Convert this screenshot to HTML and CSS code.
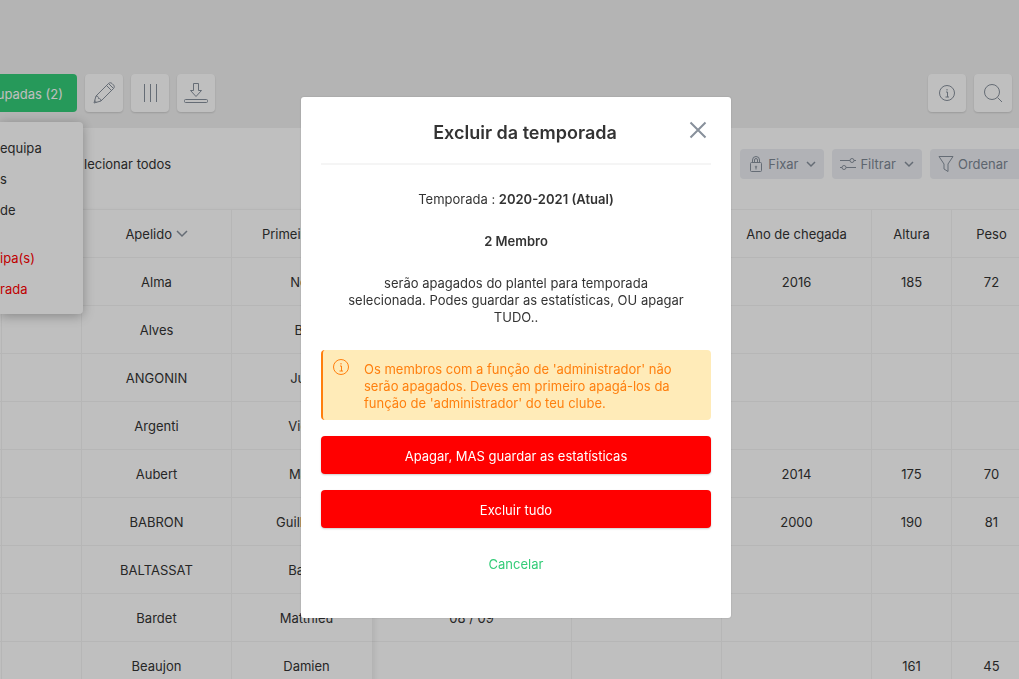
FILE: index.html
```html
<!DOCTYPE html>
<html lang="pt">
<head>
  <meta charset="UTF-8" />
  <title>Plantel</title>
  <link rel="stylesheet" href="styles.css">
</head>
<body>
  <div class="page">
    <header class="toolbar">
      <div class="grouped">
        <button class="btn-green">upadas (2)</button>
        <ul class="menu">
          <li><a href="#">equipa</a></li>
          <li><a href="#">s</a></li>
          <li><a href="#">de</a></li>
          <li class="danger first"><a href="#">ipa(s)</a></li>
          <li class="danger"><a href="#">rada</a></li>
        </ul>
      </div>
      <button class="btn-icon" aria-label="Editar">
        <svg width="24" height="24" viewBox="0 0 24 24"><path d="M2 22l2-7L16.500 2.500c1-1 2.500-1 3.500 0l1.500 1.500c1 1 1 2.500 0 3.500L9 20l-7 2zM4 15c2 0 2.500 1 2.500 2.500C8 17.500 9 18 9 20M14.500 4.500l5 5M16.500 2.500l5 5M2.800 19.500l1.700 1.700"/></svg>
      </button>
      <button class="btn-icon" aria-label="Colunas">
        <svg width="24" height="24" viewBox="0 0 24 24"><path d="M6.500 3v18M12.500 3v18M18.500 3v18"/></svg>
      </button>
      <button class="btn-icon" aria-label="Transferir">
        <svg width="24" height="24" viewBox="0 0 24 24"><path d="M9.500 2.500h5v7h3L12 15.500l-5.500-6h3zM1.500 18.500h21a1 1 0 0 1 1 1v1a1 1 0 0 1-1 1h-21a1 1 0 0 1-1-1v-1a1 1 0 0 1 1-1z"/></svg>
      </button>
      <button class="btn-icon push" aria-label="Informação">
        <svg width="18" height="18" viewBox="0 0 18 18"><circle cx="9" cy="9" r="7.500"/><path d="M8 8h1.500v5M7.500 13h3.500M9 5v1.500"/></svg>
      </button>
      <button class="btn-icon" aria-label="Procurar">
        <svg width="20" height="20" viewBox="0 0 20 20"><circle cx="9" cy="9" r="7.500"/><path d="M14.500 14.500l4.500 4.500"/></svg>
      </button>
    </header>

    <main>
      <div class="filters">
        <span class="select-all">lecionar todos</span>
        <button class="btn-filter">
          <svg width="16" height="18" viewBox="0 0 16 18"><rect x="2.500" y="7.500" width="11" height="9" rx="1"/><path d="M4.500 7.500V5a3.500 3.500 0 0 1 7 0v2.500M6.500 7.500V5a1.500 1.500 0 0 1 3 0v2.500M8 12.500v2"/><circle cx="8" cy="11.800" r=".7"/></svg>
          Fixar
          <svg class="chevron" width="10" height="10" viewBox="0 0 10 10"><path d="M1 3l4 4 4-4"/></svg>
        </button>
        <button class="btn-filter">
          <svg width="16" height="18" viewBox="0 0 16 18"><path d="M0 5.500h10M14 5.500h2M0 12.500h2M6 12.500h10"/><circle cx="12" cy="5.500" r="2"/><circle cx="4" cy="12.500" r="2"/></svg>
          Filtrar
          <svg class="chevron" width="10" height="10" viewBox="0 0 10 10"><path d="M1 3l4 4 4-4"/></svg>
        </button>
        <button class="btn-filter">
          <svg width="16" height="18" viewBox="0 0 16 18"><path d="M1 1.500h14L10 9v7.500L6 14V9z"/></svg>
          Ordenar
        </button>
      </div>

      <div class="tables">
        <div class="pinned">
          <table>
            <colgroup><col class="w-edge"><col class="w-80"><col class="w-150"><col class="w-150"></colgroup>
            <thead>
              <tr><th></th><th></th><th>Apelido <svg class="sort" width="12" height="10" viewBox="0 0 12 10"><path d="M1 2l5 5 5-5"/></svg></th><th>Primeiro nome</th></tr>
            </thead>
            <tbody>
              <tr><td></td><td></td><td>Alma</td><td>Noah</td></tr>
              <tr><td></td><td></td><td>Alves</td><td>Ben</td></tr>
              <tr><td></td><td></td><td>ANGONIN</td><td>Jules</td></tr>
              <tr><td></td><td></td><td>Argenti</td><td>Victor</td></tr>
              <tr><td></td><td></td><td>Aubert</td><td>Marin</td></tr>
              <tr><td></td><td></td><td>BABRON</td><td>Guillaume</td></tr>
              <tr><td></td><td></td><td>BALTASSAT</td><td>Basile</td></tr>
              <tr><td></td><td></td><td>Bardet</td><td>Matthieu</td></tr>
              <tr><td></td><td></td><td>Beaujon</td><td>Damien</td></tr>
            </tbody>
          </table>
        </div>
        <div class="scrolled">
          <table>
            <colgroup><col class="w-200"><col class="w-150"><col class="w-150"><col class="w-80"><col class="w-80"></colgroup>
            <thead>
              <tr><th></th><th></th><th>Ano de chegada</th><th>Altura</th><th>Peso</th></tr>
            </thead>
            <tbody>
              <tr><td></td><td></td><td>2016</td><td>185</td><td>72</td></tr>
              <tr><td></td><td></td><td></td><td></td><td></td></tr>
              <tr><td></td><td></td><td></td><td></td><td></td></tr>
              <tr><td></td><td></td><td></td><td></td><td></td></tr>
              <tr><td></td><td></td><td>2014</td><td>175</td><td>70</td></tr>
              <tr><td></td><td></td><td>2000</td><td>190</td><td>81</td></tr>
              <tr><td></td><td></td><td></td><td></td><td></td></tr>
              <tr><td>08 / 09</td><td></td><td></td><td></td><td></td></tr>
              <tr><td></td><td></td><td></td><td>161</td><td>45</td></tr>
            </tbody>
          </table>
        </div>
      </div>
    </main>
  </div>

  <div class="overlay">
    <div class="modal" role="dialog" aria-labelledby="modal-title">
      <div class="modal-header">
        <h2 id="modal-title">Excluir da temporada</h2>
        <button class="close" aria-label="Fechar">
          <svg width="18" height="18" viewBox="0 0 18 18"><path d="M1.500 1.500l15 15M16.500 1.500l-15 15"/></svg>
        </button>
      </div>
      <p>Temporada : <strong>2020-2021 (Atual)</strong></p>
      <p><strong>2 Membro</strong></p>
      <p>serão apagados do plantel para temporada selecionada. Podes guardar as estatísticas, OU apagar TUDO..</p>
      <div class="alert">
        <svg width="18" height="18" viewBox="0 0 18 18"><circle cx="9" cy="9" r="7.500"/><path d="M8 8h1.500v5M7.500 13h3.500M9 5v1.500"/></svg>
        <span>Os membros com a função de 'administrador' não serão apagados. Deves em primeiro apagá-los da função de 'administrador' do teu clube.</span>
      </div>
      <button class="btn-red">Apagar, MAS guardar as estatísticas</button>
      <button class="btn-red">Excluir tudo</button>
      <button class="btn-cancel">Cancelar</button>
    </div>
  </div>
</body>
</html>
```
FILE: styles.css
```css
* {
  box-sizing: border-box;
}
body {
  margin: 0;
  height: 100vh;
  overflow: hidden;
  font-family: Inter, "Liberation Sans", sans-serif;
  font-size: 13px;
  line-height: 17px;
  color: #333;
  background: #fff;
}
button {
  border: 0;
  padding: 0;
  font: inherit;
  cursor: pointer;
}
svg {
  display: block;
  flex: none;
  fill: none;
  stroke: #87909c;
}
a {
  color: inherit;
  text-decoration: none;
}

/* toolbar */
.toolbar {
  display: flex;
  gap: 8px;
  height: 128px;
  padding: 74px 7px 0 0;
  background: #f1f1f1;
}
.grouped {
  position: relative;
}
.btn-green {
  display: flex;
  align-items: center;
  justify-content: flex-end;
  height: 38px;
  width: 77px;
  padding: 2px 14px 0 0;
  white-space: nowrap;
  color: #fff;
  background: #33cc78;
  border-radius: 0 4px 4px 0;
}
.btn-icon {
  display: flex;
  align-items: center;
  justify-content: center;
  width: 38px;
  height: 38px;
  background: #fff;
  border-radius: 4px;
  box-shadow: 0 1px 2px rgba(0, 0, 0, .15);
}
.push {
  margin-left: auto;
}
.menu {
  position: absolute;
  top: 48px;
  left: 0;
  z-index: 2;
  width: 83px;
  margin: 0;
  padding: 11px 0 9px;
  list-style: none;
  background: #fff;
  border-radius: 0 4px 4px 0;
  box-shadow: 0 2px 12px rgba(0, 0, 0, .3);
}
.menu a {
  display: block;
  padding: 7px 0;
}
.menu .danger {
  color: #ff0000;
}
.menu .first {
  margin-top: 17px;
}

/* filters */
.filters {
  display: flex;
  align-items: center;
  gap: 8px;
  height: 81px;
  padding: 0 0 9px 84px;
  overflow: hidden;
}
.select-all {
  margin-right: auto;
}
.btn-filter {
  display: flex;
  align-items: center;
  gap: 4px;
  height: 30px;
  padding: 0 8px;
  color: #7d8793;
  background: #eceef3;
  border-radius: 4px;
}
.btn-filter:last-child {
  margin-right: -12px;
  padding-right: 23px;
}
.chevron {
  margin-left: 4px;
  stroke-width: 1.5;
}

/* tables */
.tables {
  display: flex;
}
.pinned {
  position: relative;
  z-index: 1;
  flex: none;
  width: 372px;
  overflow: hidden;
  box-shadow: 5px 0 5px -2px rgba(0, 0, 0, .07);
}
.scrolled {
  flex: 1;
  overflow: hidden;
}
table {
  table-layout: fixed;
  width: 0;
  border-collapse: separate;
  border-spacing: 0;
  border-top: 1px solid #f3f3f3;
}
.w-edge {
  width: 2px;
}
.w-80 {
  width: 80px;
}
.w-150 {
  width: 150px;
}
.w-200 {
  width: 200px;
}
th,
td {
  height: 48px;
  padding: 2px 0 0;
  font-weight: 400;
  text-align: center;
  white-space: nowrap;
  border-right: 1px solid #f3f3f3;
  border-bottom: 1px solid #f3f3f3;
}
.sort {
  display: inline-block;
  stroke-width: 1.5;
}

/* modal */
.overlay {
  position: fixed;
  inset: 0;
  z-index: 10;
  display: flex;
  align-items: flex-start;
  justify-content: center;
  padding: 97px 0 0 13px;
  background: rgba(0, 0, 0, .25);
}
.modal {
  display: flex;
  flex-direction: column;
  width: 430px;
  padding: 20px 20px 36px;
  background: #fff;
  border-radius: 3px;
  box-shadow: 0 0 2px rgba(0, 0, 0, .2);
}
.modal-header {
  display: flex;
  align-items: flex-start;
  height: 48px;
  margin-bottom: 25px;
  border-bottom: 2px solid #f5f5f5;
}
h2 {
  flex: 1;
  margin: 0;
  padding-left: 44px;
  font-size: 18px;
  line-height: 32px;
  font-weight: 600;
  text-align: center;
}
.close {
  padding: 4px;
  background: none;
}
.close svg {
  stroke-width: 2;
  stroke: #88909b;
}
.modal p {
  margin: 0 0 24px;
  padding: 1px 24px 0;
  text-align: center;
}
strong {
  font-weight: 600;
}
.alert {
  display: flex;
  gap: 14px;
  margin-bottom: 16px;
  padding: 8px 20px 8px 9px;
  color: #ff7f0e;
  background: #ffebb8;
  border-left: 2px solid #ff7f0e;
  border-radius: 4px;
}
.alert svg {
  stroke: #ff7f0e;
}
.alert span {
  padding-top: 3px;
}
.btn-red {
  height: 38px;
  margin-bottom: 16px;
  padding-top: 2px;
  color: #fff;
  background: #ff0000;
  border-radius: 4px;
  box-shadow: 0 1px 2px rgba(0, 0, 0, .2);
}
.btn-cancel {
  height: 38px;
  padding-top: 2px;
  color: #33cc78;
  background: none;
}
```
